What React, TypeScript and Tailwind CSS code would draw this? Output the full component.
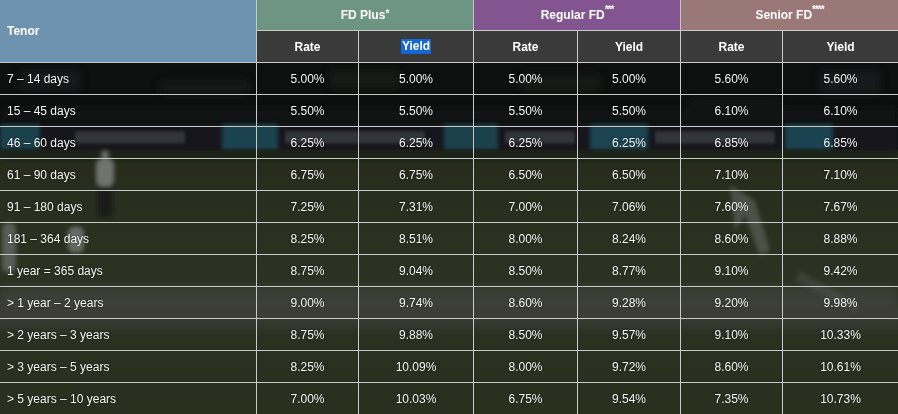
import React from "react";

const rows: string[][] = [
  ["7 – 14 days", "5.00%", "5.00%", "5.00%", "5.00%", "5.60%", "5.60%"],
  ["15 – 45 days", "5.50%", "5.50%", "5.50%", "5.50%", "6.10%", "6.10%"],
  ["46 – 60 days", "6.25%", "6.25%", "6.25%", "6.25%", "6.85%", "6.85%"],
  ["61 – 90 days", "6.75%", "6.75%", "6.50%", "6.50%", "7.10%", "7.10%"],
  ["91 – 180 days", "7.25%", "7.31%", "7.00%", "7.06%", "7.60%", "7.67%"],
  ["181 – 364 days", "8.25%", "8.51%", "8.00%", "8.24%", "8.60%", "8.88%"],
  ["1 year = 365 days", "8.75%", "9.04%", "8.50%", "8.77%", "9.10%", "9.42%"],
  ["> 1 year – 2 years", "9.00%", "9.74%", "8.60%", "9.28%", "9.20%", "9.98%"],
  ["> 2 years – 3 years", "8.75%", "9.88%", "8.50%", "9.57%", "9.10%", "10.33%"],
  ["> 3 years – 5 years", "8.25%", "10.09%", "8.00%", "9.72%", "8.60%", "10.61%"],
  ["> 5 years – 10 years", "7.00%", "10.03%", "6.75%", "9.54%", "7.35%", "10.73%"],
];

function Background() {
  const letterBlocks: [number, number][] = [
    [75, 110],
    [285, 140],
    [505, 70],
    [655, 120],
  ];
  return (
    <svg
      className="absolute inset-0 h-full w-full"
      viewBox="0 0 898 414"
      preserveAspectRatio="none"
    >
      <defs>
        <filter id="b4" x="-20%" y="-20%" width="140%" height="140%">
          <feGaussianBlur stdDeviation="4" />
        </filter>
        <filter id="b2" x="-20%" y="-20%" width="140%" height="140%">
          <feGaussianBlur stdDeviation="2" />
        </filter>
        <filter id="b1" x="-20%" y="-20%" width="140%" height="140%">
          <feGaussianBlur stdDeviation="1.5" />
        </filter>
        <linearGradient id="field" x1="0" y1="0" x2="0" y2="1">
          <stop offset="0" stopColor="#262b1c" />
          <stop offset="0.35" stopColor="#2b3020" />
          <stop offset="0.55" stopColor="#2e3223" />
          <stop offset="0.62" stopColor="#3c3e37" />
          <stop offset="0.7" stopColor="#2c3021" />
          <stop offset="1" stopColor="#2a2f1e" />
        </linearGradient>
      </defs>
      <rect x="0" y="150" width="898" height="264" fill="url(#field)" />
      <rect x="0" y="286" width="898" height="22" fill="#4a4b46" opacity="0.5" filter="url(#b4)" />
      <rect x="0" y="0" width="898" height="128" fill="#0d100f" />
      <g filter="url(#b4)" opacity="0.6">
        <rect x="20" y="70" width="60" height="20" fill="#1e2220" />
        <rect x="160" y="80" width="90" height="14" fill="#1a1e1c" />
        <rect x="330" y="70" width="70" height="18" fill="#1d211f" />
        <rect x="520" y="75" width="80" height="16" fill="#1c201e" />
        <rect x="690" y="100" width="90" height="18" fill="#1a1e1b" />
        <rect x="820" y="70" width="60" height="24" fill="#1e2220" />
        <rect x="0" y="108" width="898" height="14" fill="#141816" />
      </g>
      <rect x="0" y="124" width="898" height="28" fill="#15191b" filter="url(#b1)" />
      <g filter="url(#b2)" opacity="0.85">
        <rect x="0" y="124" width="40" height="26" fill="#1c4a55" />
        <rect x="222" y="124" width="56" height="26" fill="#1c4c58" />
        <rect x="444" y="124" width="54" height="26" fill="#1b4a56" />
        <rect x="590" y="124" width="58" height="26" fill="#1c4e5a" />
        <rect x="785" y="124" width="48" height="26" fill="#1c4c58" />
      </g>
      <g filter="url(#b1)" fill="#30363a">
        {letterBlocks.map(([x, w], i) => (
          <rect key={i} x={x} y={131} width={w} height={12} rx={2} />
        ))}
      </g>
      <rect x="0" y="150" width="898" height="10" fill="#1f2419" filter="url(#b2)" />
      <g filter="url(#b2)" opacity="0.75">
        <rect x="96" y="158" width="18" height="28" rx="6" fill="#8a8c88" />
        <rect x="98" y="186" width="14" height="30" fill="#151612" />
        <circle cx="105" cy="154" r="4" fill="#8a8a86" />
        <rect x="68" y="226" width="16" height="26" rx="6" fill="#7d7f7b" />
        <rect x="2" y="222" width="14" height="50" rx="6" fill="#6a6c68" />
        <path d="M730 185 L755 200 L770 250 L760 255 L745 215 L735 230 Z" fill="#6f716d" opacity="0.7" />
        <path d="M800 270 L860 305 L855 312 L795 280 Z" fill="#5a5c58" opacity="0.5" />
      </g>
    </svg>
  );
}

export default function App() {
  const font = { fontFamily: "'Liberation Sans', Arial, Helvetica, sans-serif" };
  const border = "border-[#c9c9c9]";
  return (
    <div className="h-[414px] w-[898px] overflow-hidden bg-[#0d100f]" style={font}>
      <div className="relative w-[898px]">
        <Background />
        <div className="relative grid grid-cols-[257px_102px_115px_104px_103px_102px_115px] text-[12px] text-white">
          <div className={`row-span-2 flex items-center border-r border-b ${border} bg-[#6e93b0] pl-[7px] font-bold`}>
            Tenor
          </div>
          <div className={`col-span-2 flex h-[31px] items-center justify-center border-r border-b ${border} bg-[#6e9583] font-bold`}>
            FD Plus<sup className="relative top-[-1px] text-[10px]">*</sup>
          </div>
          <div className={`col-span-2 flex h-[31px] items-center justify-center border-r border-b ${border} bg-[#825590] font-bold`}>
            Regular FD<sup className="text-[10px] tracking-[-1px]">***</sup>
          </div>
          <div className={`col-span-2 flex h-[31px] items-center justify-center border-b ${border} bg-[#9a7877] font-bold`}>
            Senior FD<sup className="text-[10px] tracking-[-1px]">****</sup>
          </div>
          {["Rate", "Yield", "Rate", "Yield", "Rate", "Yield"].map((t, i) => (
            <div
              key={i}
              className={`flex h-[32px] items-center justify-center border-b ${i < 5 ? "border-r" : ""} ${border} bg-[#3a3a3a] font-bold`}
            >
              {i === 1 ? <span className="bg-[#1766d6] px-px leading-[15px]">{t}</span> : t}
            </div>
          ))}
          {rows.map((r, ri) =>
            r.map((c, ci) => (
              <div
                key={`${ri}-${ci}`}
                className={`flex h-[32px] items-center border-b ${ci < 6 ? "border-r" : ""} ${border} ${
                  ci === 0 ? "pl-[7px]" : "justify-center"
                } text-[#f4f4f4] [text-shadow:0_0_2px_rgba(0,0,0,0.6)]`}
              >
                {c}
              </div>
            ))
          )}
        </div>
      </div>
    </div>
  );
}
